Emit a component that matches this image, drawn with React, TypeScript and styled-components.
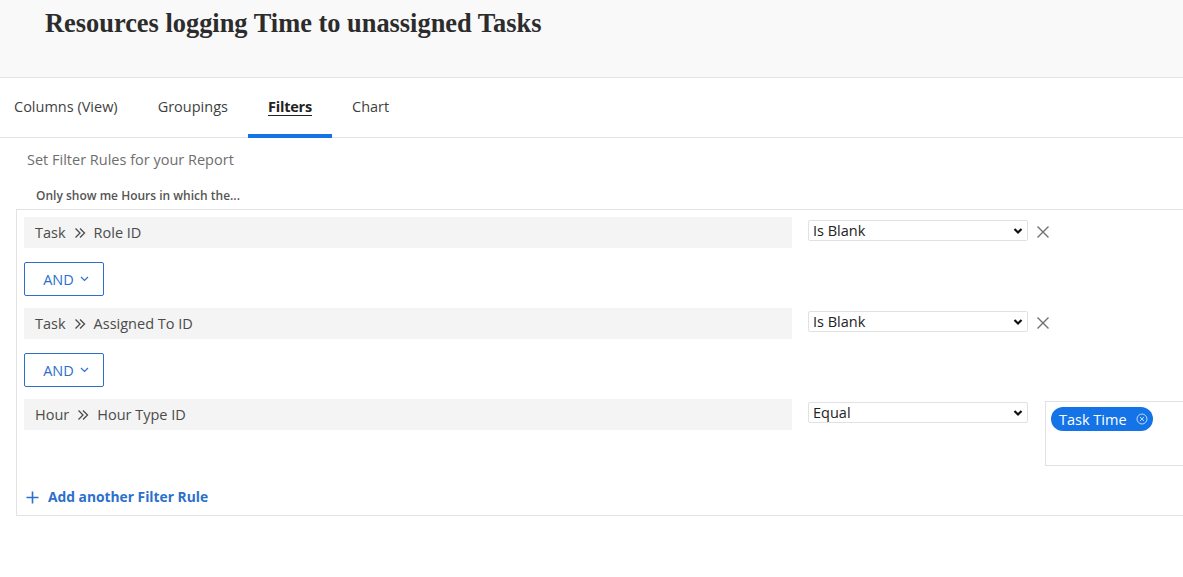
import React from "react";
import styled, { createGlobalStyle } from "styled-components";

const Global = createGlobalStyle`
  html, body { margin: 0; padding: 0; background: #fff; overflow: hidden; }
  body { font-family: "Open Sans", "Noto Sans", Arial, sans-serif; color: #4b4b4b; }
  * { box-sizing: border-box; }
`;

const Header = styled.header`
  height: 78px;
  background: #f9f9f9;
  border-bottom: 1px solid #e3e3e3;
  padding: 7px 0 0 45px;
`;

const Title = styled.h1`
  margin: 0;
  font-family: "Liberation Serif", "Times New Roman", serif;
  font-weight: bold;
  font-size: 26.4px;
  line-height: 32px;
  color: #2c2c2c;
`;

const TabBar = styled.nav`
  display: flex;
  height: 60px;
  border-bottom: 1px solid #e3e3e3;
  padding-bottom: 3px;
`;

const Tab = styled.div<{ $active?: boolean }>`
  position: relative;
  display: flex;
  align-items: center;
  padding: 0 20px;
  font-size: 14.5px;
  color: ${(p) => (p.$active ? "#222" : "#3f3f3f")};
  font-weight: ${(p) => (p.$active ? 700 : 400)};
  letter-spacing: ${(p) => (p.$active ? "-0.2px" : "0")};
  text-decoration: ${(p) => (p.$active ? "underline" : "none")};
  text-underline-offset: 3px;
  &:first-child { padding-left: 14px; }
  &::after {
    content: "";
    display: ${(p) => (p.$active ? "block" : "none")};
    position: absolute;
    left: 0;
    right: 0;
    bottom: -4px;
    height: 4px;
    background: #1473e6;
  }
`;

const Content = styled.main`
  padding: 12px 0 0 16px;
`;

const Intro = styled.div`
  font-size: 14.5px;
  color: #6e6e6e;
  padding-left: 11px;
  line-height: 20px;
`;

const Lead = styled.div`
  font-size: 12px;
  font-weight: 600;
  color: #555;
  padding: 18px 0 0 20px;
  line-height: 16px;
`;

const Panel = styled.section`
  margin-top: 5px;
  width: 1220px;
  border: 1px solid #e3e3e3;
  padding: 7px 0 9px 7px;
`;

const RuleRow = styled.div`
  display: flex;
  align-items: flex-start;
`;

const Field = styled.div`
  width: 768px;
  height: 31px;
  background: #f4f4f4;
  display: flex;
  align-items: center;
  gap: 8px;
  padding-left: 11px;
  font-size: 14.5px;
  color: #4b4b4b;
`;

const SelectBox = styled.div`
  margin: 3px 0 0 16px;
  width: 220px;
  height: 21px;
  border: 1px solid #e1e1e1;
  border-radius: 2px;
  display: flex;
  align-items: center;
  justify-content: space-between;
  padding: 0 4px 0 4px;
  font-size: 14.5px;
  color: #222;
  background: #fff;
`;

const RemoveButton = styled.button`
  border: 0;
  background: none;
  padding: 0;
  margin: 8px 0 0 8px;
  width: 14px;
  height: 14px;
  display: flex;
  color: #707070;
`;

const AndButton = styled.button`
  margin: 14px 0 12px;
  width: 80px;
  height: 34px;
  border: 1px solid #2c6fcc;
  border-radius: 2px;
  background: #fff;
  color: #2c6fcc;
  font-family: inherit;
  font-size: 14.5px;
  display: flex;
  align-items: center;
  justify-content: center;
  gap: 6px;
  padding: 0 0 0 4px;
`;

const ValueBox = styled.div`
  margin: 2px 0 0 17px;
  width: 160px;
  height: 65px;
  border: 1px solid #e1e1e1;
  padding: 5px 0 0 5px;
`;

const Chip = styled.span`
  display: inline-flex;
  align-items: center;
  gap: 9px;
  height: 24px;
  border-radius: 12px;
  background: #1473e6;
  color: #fff;
  font-size: 14.5px;
  padding: 0 5px 0 8px;
`;

const AddLink = styled.a`
  display: flex;
  align-items: center;
  gap: 9px;
  margin: 22px 0 0 2px;
  color: #2c6fcc;
  font-size: 13.8px;
  font-weight: 700;
  text-decoration: none;
  line-height: 18px;
`;

const Chevrons = () => (
  <svg width="12" height="12" viewBox="0 0 12 12" fill="none" stroke="#4b4b4b" strokeWidth="1.3">
    <path d="M1.5 1.5 L6 6 L1.5 10.5" />
    <path d="M6 1.5 L10.5 6 L6 10.5" />
  </svg>
);

const Caret = () => (
  <svg width="10" height="8" viewBox="0 0 10 8" fill="none" stroke="#111" strokeWidth="2.2">
    <path d="M1.5 2 L5 5.5 L8.5 2" />
  </svg>
);

const SmallCaret = () => (
  <svg width="9" height="6" viewBox="0 0 9 6" fill="none" stroke="#2c6fcc" strokeWidth="1.2">
    <path d="M1 1 L4.5 4.5 L8 1" />
  </svg>
);

const Cross = () => (
  <svg width="14" height="14" viewBox="0 0 14 14" fill="none" stroke="currentColor" strokeWidth="1.4">
    <path d="M1.5 1.5 L12.5 12.5 M12.5 1.5 L1.5 12.5" />
  </svg>
);

const CircleCross = () => (
  <svg width="12" height="12" viewBox="0 0 12 12" fill="none" stroke="#cfe2fb" strokeWidth="0.9">
    <circle cx="6" cy="6" r="5" />
    <path d="M4 4 L8 8 M8 4 L4 8" />
  </svg>
);

const Plus = () => (
  <svg width="13" height="13" viewBox="0 0 13 13" fill="none" stroke="#2c6fcc" strokeWidth="1.6">
    <path d="M6.5 0.5 V12.5 M0.5 6.5 H12.5" />
  </svg>
);

type Rule = { entity: string; field: string; op: string; value?: string };

const rules: Rule[] = [
  { entity: "Task", field: "Role ID", op: "Is Blank" },
  { entity: "Task", field: "Assigned To ID", op: "Is Blank" },
  { entity: "Hour", field: "Hour Type ID", op: "Equal", value: "Task Time" },
];

export default function App() {
  return (
    <>
      <Global />
      <Header>
        <Title>Resources logging Time to unassigned Tasks</Title>
      </Header>
      <TabBar>
        <Tab>Columns (View)</Tab>
        <Tab>Groupings</Tab>
        <Tab $active>Filters</Tab>
        <Tab>Chart</Tab>
      </TabBar>
      <Content>
        <Intro>Set Filter Rules for your Report</Intro>
        <Lead>Only show me Hours in which the...</Lead>
        <Panel>
          {rules.map((r, i) => (
            <React.Fragment key={i}>
              <RuleRow>
                <Field>
                  <span>{r.entity}</span>
                  <Chevrons />
                  <span>{r.field}</span>
                </Field>
                <SelectBox>
                  <span>{r.op}</span>
                  <Caret />
                </SelectBox>
                {r.value ? (
                  <ValueBox>
                    <Chip>
                      {r.value}
                      <CircleCross />
                    </Chip>
                  </ValueBox>
                ) : (
                  <RemoveButton aria-label="Remove">
                    <Cross />
                  </RemoveButton>
                )}
              </RuleRow>
              {i < rules.length - 1 && (
                <AndButton>
                  AND <SmallCaret />
                </AndButton>
              )}
            </React.Fragment>
          ))}
          <AddLink href="#">
            <Plus />
            Add another Filter Rule
          </AddLink>
        </Panel>
      </Content>
    </>
  );
}
